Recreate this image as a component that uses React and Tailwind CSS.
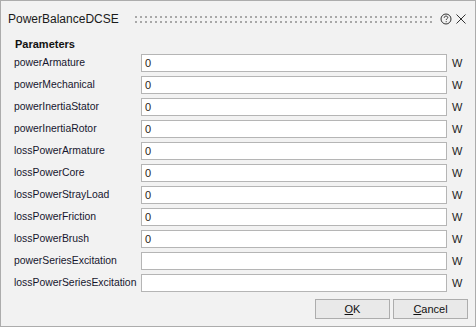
import React from 'react'

const rows = [
  ['powerArmature', '0'],
  ['powerMechanical', '0'],
  ['powerInertiaStator', '0'],
  ['powerInertiaRotor', '0'],
  ['lossPowerArmature', '0'],
  ['lossPowerCore', '0'],
  ['lossPowerStrayLoad', '0'],
  ['lossPowerFriction', '0'],
  ['lossPowerBrush', '0'],
  ['powerSeriesExcitation', ''],
  ['lossPowerSeriesExcitation', ''],
]

function Grip() {
  return (
    <svg width="297" height="8" className="block">
      <defs>
        <pattern id="grip" width="5" height="5" patternUnits="userSpaceOnUse">
          <rect x="0" y="0" width="2" height="2" fill="#a8a8a8" />
        </pattern>
      </defs>
      <rect x="0" y="0" width="297" height="7" fill="url(#grip)" />
    </svg>
  )
}

function HelpIcon() {
  return (
    <svg width="12" height="12" viewBox="0 0 12 12" className="block">
      <circle cx="6" cy="6" r="5" fill="none" stroke="#333" strokeWidth="1" />
      <path d="M4.2 4.8 C4.2 3.6 5 3.1 6 3.1 C7 3.1 7.8 3.7 7.8 4.6 C7.8 5.6 6.2 5.8 6.2 7" fill="none" stroke="#333" strokeWidth="1" />
      <rect x="5.7" y="8.2" width="1" height="1" fill="#333" />
    </svg>
  )
}

function CloseIcon() {
  return (
    <svg width="10" height="10" viewBox="0 0 10 10" className="block">
      <path d="M0.5 0.5 L9.5 9.5 M9.5 0.5 L0.5 9.5" stroke="#333" strokeWidth="1" />
    </svg>
  )
}

export default function App() {
  return (
    <div
      className="w-[476px] h-[327px] border border-[#acacac] bg-[#f2f2f2] flex flex-col text-[#1c1c34]"
      style={{ fontFamily: '"Liberation Sans", Arial, sans-serif' }}
    >
      <div className="h-[36px] flex items-center pl-[7px] pr-[9px]">
        <span className="text-[12px] text-[#1a1a1a] w-[127px]">PowerBalanceDCSE</span>
        <div className="pt-[1px]">
          <Grip />
        </div>
        <div className="ml-auto flex items-center gap-[4px]">
          <HelpIcon />
          <CloseIcon />
        </div>
      </div>

      <div className="pl-[14px] text-[11px] font-bold leading-[14px] text-[#111]">Parameters</div>

      <div className="mt-[3px] flex flex-col gap-[4px] pl-[13px]">
        {rows.map(([label, value]) => (
          <div key={label} className="flex items-center h-[18px]">
            <span className="w-[127px] text-[10.4px] whitespace-nowrap text-[#16162e]">{label}</span>
            <div className="w-[306px] h-[18px] border border-[#b5b5b5] bg-white flex items-center pl-[3px] text-[11px] text-[#2a2418]">
              {value}
            </div>
            <span className="ml-[5px] text-[11px] text-[#222]">W</span>
          </div>
        ))}
      </div>

      <div className="mt-[7px] flex justify-end gap-[3px] pr-[7px]">
        <button className="w-[75px] h-[20px] border border-[#adadad] bg-[#e9e9e9] text-[11px] text-[#111] flex items-center justify-center">
          <span><span className="underline">O</span>K</span>
        </button>
        <button className="w-[75px] h-[20px] border border-[#adadad] bg-[#e9e9e9] text-[11px] text-[#111] flex items-center justify-center">
          <span><span className="underline">C</span>ancel</span>
        </button>
      </div>
    </div>
  )
}
